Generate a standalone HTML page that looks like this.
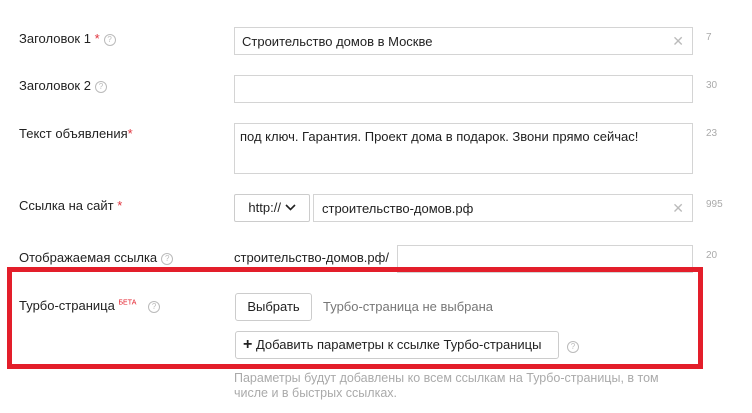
<!DOCTYPE html>
<html><head><meta charset="utf-8"><style>
body{margin:0;width:752px;height:413px;background:#fff;font-family:"Liberation Sans",sans-serif;font-size:13px;color:#222;position:relative;overflow:hidden}
.a{position:absolute}
.lbl{left:19px}
.req{color:#e0323c}
.q{display:inline-block;width:10px;height:10px;border:1px solid #bbb;border-radius:50%;font-size:8px;color:#bbb;text-align:center;line-height:10px;vertical-align:1px;margin-left:4px}
.inp{border:1px solid #d4d4d4;box-sizing:border-box;background:#fff}
.cnt{font-size:10px;color:#aaa;left:706px}
.x{position:absolute;right:8px;top:50%;margin-top:-6px;color:#bbb;font-size:14px;line-height:12px}
.btn{border:1px solid #ccc;border-radius:3px;box-sizing:border-box;background:#fff;text-align:center}
</style></head><body>
<div class="a lbl" style="top:31px">Заголовок 1 <span class="req">*</span><span class="q">?</span></div>
<div class="a inp" style="left:234px;top:27px;width:459px;height:28px"><span class="a" style="left:7px;top:6px">Строительство домов в Москве</span><span class="x">✕</span></div>
<div class="a cnt" style="top:32px">7</div>

<div class="a lbl" style="top:78px">Заголовок 2<span class="q">?</span></div>
<div class="a inp" style="left:234px;top:75px;width:459px;height:28px"></div>
<div class="a cnt" style="top:80px">30</div>

<div class="a lbl" style="top:126px">Текст объявления<span class="req">*</span></div>
<div class="a inp" style="left:234px;top:123px;width:459px;height:51px"><span class="a" style="left:5px;top:5px">под ключ. Гарантия. Проект дома в подарок. Звони прямо сейчас!</span></div>
<div class="a cnt" style="top:128px">23</div>

<div class="a lbl" style="top:198px">Ссылка на сайт <span class="req">*</span></div>
<div class="a btn" style="left:234px;top:194px;width:76px;height:28px;border-radius:2px;line-height:26px">http:// <svg width="11" height="7" viewBox="0 0 11 7" style="vertical-align:1px"><path d="M1 1l4.5 4.5L10 1" fill="none" stroke="#222" stroke-width="1.6"/></svg></div>
<div class="a inp" style="left:313px;top:194px;width:380px;height:28px"><span class="a" style="left:8px;top:6px">строительство-домов.рф</span><span class="x">✕</span></div>
<div class="a cnt" style="top:199px">995</div>

<div class="a lbl" style="top:250px">Отображаемая ссылка<span class="q">?</span></div>
<div class="a" style="left:234px;top:250px">строительство-домов.рф/</div>
<div class="a inp" style="left:397px;top:245px;width:296px;height:28px"></div>
<div class="a cnt" style="top:250px">20</div>

<div class="a" style="left:7px;top:267px;width:686px;height:92px;border:5px solid #e31e2a"></div>

<div class="a lbl" style="top:298px">Турбо-страница <sup style="color:#e31e2a;font-size:7px">БЕТА</sup> <span class="q" style="margin-left:8px">?</span></div>
<div class="a btn" style="left:235px;top:293px;width:77px;height:28px;line-height:26px">Выбрать</div>
<div class="a" style="left:323px;top:299px;color:#777">Турбо-страница не выбрана</div>
<div class="a btn" style="left:235px;top:331px;width:324px;height:28px;line-height:26px;text-align:left;padding-left:7px"><b style="font-size:16px">+</b> Добавить параметры к ссылке Турбо-страницы</div>
<div class="a" style="left:563px;top:338px"><span class="q">?</span></div>

<div class="a" style="left:234px;top:371px;color:#aaa;font-size:12.5px;line-height:15px;width:450px">Параметры будут добавлены ко всем ссылкам на Турбо-страницы, в том числе и в быстрых ссылках.</div>
</body></html>
